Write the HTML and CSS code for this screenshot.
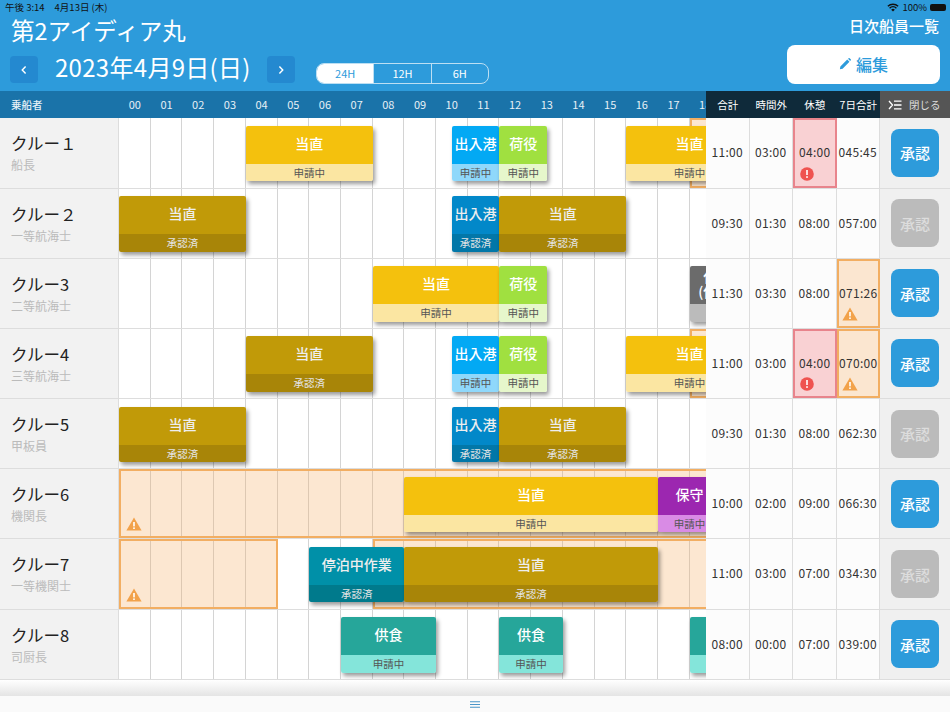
FILE: index.html
```html
<!DOCTYPE html>
<html lang="ja">
<head>
  <meta charset="UTF-8">
  <title>日次船員一覧</title>
  <link rel="stylesheet" href="styles.css">
</head>
<body>
  <svg class="defs" width="0" height="0">
    <symbol id="warn" viewBox="0 0 16 14">
      <path d="M8 .5 15.6 13.6H.4Z" fill="#f2a24a"/>
      <rect x="7.2" y="5" width="1.6" height="4.4" fill="#fff"/>
      <rect x="7.2" y="10.4" width="1.6" height="1.6" fill="#fff"/>
    </symbol>
    <symbol id="alert" viewBox="0 0 14 14">
      <circle cx="7" cy="7" r="6.8" fill="#ef5350"/>
      <rect x="6.2" y="3" width="1.6" height="5" fill="#fff"/>
      <rect x="6.2" y="9.2" width="1.6" height="1.7" fill="#fff"/>
    </symbol>
  </svg>

  <div class="app">
    <header class="topbar">
      <div class="status">
        <span class="status-time">午後 3:14<span class="status-date">4月13日 (木)</span></span>
        <span class="status-right">
          <svg class="wifi" viewBox="0 0 14 10" width="12" height="9"><path d="M1 3.6a8.6 8.6 0 0 1 12 0M3 5.8a5.7 5.7 0 0 1 8 0" fill="none" stroke="#111" stroke-width="1.6"/><path d="M7 9.6 4.9 7.6a3 3 0 0 1 4.2 0Z" fill="#111"/></svg>
          100%
          <span class="battery"></span>
        </span>
      </div>
      <div class="topbar-main">
        <div class="topbar-left">
          <h1 class="ship">第2アイディア丸</h1>
          <div class="date-row">
            <button class="nav-btn"><svg viewBox="0 0 10 12" width="8" height="10"><path d="M7 1.5 2.8 6 7 10.500" fill="none" stroke="#fff" stroke-width="1.8"/></svg></button>
            <span class="date">2023年4月9日(日)</span>
            <button class="nav-btn"><svg viewBox="0 0 10 12" width="8" height="10"><path d="M3 1.5 7.200 6 3 10.500" fill="none" stroke="#fff" stroke-width="1.8"/></svg></button>
            <div class="segments">
              <span class="seg seg-active">24H</span>
              <span class="seg">12H</span>
              <span class="seg">6H</span>
            </div>
          </div>
        </div>
        <div class="topbar-right">
          <div class="page-name">日次船員一覧</div>
          <button class="edit-btn">
            <svg viewBox="0 0 14 14" width="12" height="12"><path d="M1 13 1.600 9.800 9.600 1.800 12.200 4.400 4.200 12.400Z M10.500 1 11.300.3a.8.8 0 0 1 1.100 0l1.300 1.300a.8.8 0 0 1 0 1.100L13 3.500Z" fill="#2d9bdb"/></svg>
            編集
          </button>
        </div>
      </div>
    </header>

    <div class="table-head">
      <div class="head-crew">乗船者</div>
      <div class="head-hours">
        <span>00</span><span>01</span><span>02</span><span>03</span><span>04</span><span>05</span>
        <span>06</span><span>07</span><span>08</span><span>09</span><span>10</span><span>11</span>
        <span>12</span><span>13</span><span>14</span><span>15</span><span>16</span><span>17</span>
        <span>18</span>
      </div>
      <div class="head-sum"><span>合計</span><span>時間外</span><span>休憩</span><span>7日合計</span></div>
      <div class="head-close">
        <svg viewBox="0 0 14 10" width="14" height="10"><path d="M1 1 4.500 5 1 9M6 1.200H13.500M6 5H13.500M6 8.800H13.500" fill="none" stroke="#fff" stroke-width="1.300"/></svg>
        閉じる
      </div>
    </div>

    <div class="row">
      <div class="crew"><div class="crew-name">クルー１</div><div class="crew-role">船長</div></div>
      <div class="timeline">
        <div class="over" style="--start:18;--hours:3"></div>
        <div class="block duty" style="--start:4;--hours:4"><div class="block-title">当直</div><div class="block-state">申請中</div></div>
        <div class="block port" style="--start:10.5;--hours:1.5"><div class="block-title">出入港</div><div class="block-state">申請中</div></div>
        <div class="block cargo" style="--start:12;--hours:1.5"><div class="block-title">荷役</div><div class="block-state">申請中</div></div>
        <div class="block duty" style="--start:16;--hours:4"><div class="block-title">当直</div><div class="block-state">申請中</div></div>
      </div>
      <div class="sum">
        <div class="cell">11:00</div><div class="cell">03:00</div>
        <div class="cell cell-alert">04:00<svg class="mark"><use href="#alert"/></svg></div>
        <div class="cell">045:45</div>
      </div>
      <div class="action"><button class="approve">承認</button></div>
    </div>

    <div class="row">
      <div class="crew"><div class="crew-name">クルー２</div><div class="crew-role">一等航海士</div></div>
      <div class="timeline">
        <div class="block duty done" style="--start:0;--hours:4"><div class="block-title">当直</div><div class="block-state">承認済</div></div>
        <div class="block port done" style="--start:10.5;--hours:1.5"><div class="block-title">出入港</div><div class="block-state">承認済</div></div>
        <div class="block duty done" style="--start:12;--hours:4"><div class="block-title">当直</div><div class="block-state">承認済</div></div>
      </div>
      <div class="sum">
        <div class="cell">09:30</div><div class="cell">01:30</div><div class="cell">08:00</div><div class="cell">057:00</div>
      </div>
      <div class="action"><button class="approve approve-off">承認</button></div>
    </div>

    <div class="row">
      <div class="crew"><div class="crew-name">クルー3</div><div class="crew-role">二等航海士</div></div>
      <div class="timeline">
        <div class="block duty" style="--start:8;--hours:4"><div class="block-title">当直</div><div class="block-state">申請中</div></div>
        <div class="block cargo" style="--start:12;--hours:1.5"><div class="block-title">荷役</div><div class="block-state">申請中</div></div>
        <div class="block rest" style="--start:18;--hours:1.75"><div class="block-title block-title-two">休憩<br>(停泊)</div><div class="block-state"></div></div>
      </div>
      <div class="sum">
        <div class="cell">11:30</div><div class="cell">03:30</div><div class="cell">08:00</div>
        <div class="cell cell-warn">071:26<svg class="mark mark-warn"><use href="#warn"/></svg></div>
      </div>
      <div class="action"><button class="approve">承認</button></div>
    </div>

    <div class="row">
      <div class="crew"><div class="crew-name">クルー4</div><div class="crew-role">三等航海士</div></div>
      <div class="timeline">
        <div class="over" style="--start:18;--hours:3"></div>
        <div class="block duty done" style="--start:4;--hours:4"><div class="block-title">当直</div><div class="block-state">承認済</div></div>
        <div class="block port" style="--start:10.5;--hours:1.5"><div class="block-title">出入港</div><div class="block-state">申請中</div></div>
        <div class="block cargo" style="--start:12;--hours:1.5"><div class="block-title">荷役</div><div class="block-state">申請中</div></div>
        <div class="block duty" style="--start:16;--hours:4"><div class="block-title">当直</div><div class="block-state">申請中</div></div>
      </div>
      <div class="sum">
        <div class="cell">11:00</div><div class="cell">03:00</div>
        <div class="cell cell-alert">04:00<svg class="mark"><use href="#alert"/></svg></div>
        <div class="cell cell-warn">070:00<svg class="mark mark-warn"><use href="#warn"/></svg></div>
      </div>
      <div class="action"><button class="approve">承認</button></div>
    </div>

    <div class="row">
      <div class="crew"><div class="crew-name">クルー5</div><div class="crew-role">甲板員</div></div>
      <div class="timeline">
        <div class="block duty done" style="--start:0;--hours:4"><div class="block-title">当直</div><div class="block-state">承認済</div></div>
        <div class="block port done" style="--start:10.5;--hours:1.5"><div class="block-title">出入港</div><div class="block-state">承認済</div></div>
        <div class="block duty done" style="--start:12;--hours:4"><div class="block-title">当直</div><div class="block-state">承認済</div></div>
      </div>
      <div class="sum">
        <div class="cell">09:30</div><div class="cell">01:30</div><div class="cell">08:00</div><div class="cell">062:30</div>
      </div>
      <div class="action"><button class="approve approve-off">承認</button></div>
    </div>

    <div class="row">
      <div class="crew"><div class="crew-name">クルー6</div><div class="crew-role">機関長</div></div>
      <div class="timeline">
        <div class="over" style="--start:0;--hours:21"><svg class="mark mark-warn"><use href="#warn"/></svg></div>
        <div class="block duty" style="--start:9;--hours:8"><div class="block-title">当直</div><div class="block-state">申請中</div></div>
        <div class="block repair" style="--start:17;--hours:2"><div class="block-title">保守</div><div class="block-state">申請中</div></div>
      </div>
      <div class="sum">
        <div class="cell">10:00</div><div class="cell">02:00</div><div class="cell">09:00</div><div class="cell">066:30</div>
      </div>
      <div class="action"><button class="approve">承認</button></div>
    </div>

    <div class="row">
      <div class="crew"><div class="crew-name">クルー7</div><div class="crew-role">一等機関士</div></div>
      <div class="timeline">
        <div class="over" style="--start:0;--hours:5"><svg class="mark mark-warn"><use href="#warn"/></svg></div>
        <div class="over" style="--start:8;--hours:13"></div>
        <div class="block work done" style="--start:6;--hours:3"><div class="block-title">停泊中作業</div><div class="block-state">承認済</div></div>
        <div class="block duty done" style="--start:9;--hours:8"><div class="block-title">当直</div><div class="block-state">承認済</div></div>
      </div>
      <div class="sum">
        <div class="cell">11:00</div><div class="cell">03:00</div><div class="cell">07:00</div><div class="cell">034:30</div>
      </div>
      <div class="action"><button class="approve approve-off">承認</button></div>
    </div>

    <div class="row">
      <div class="crew"><div class="crew-name">クルー8</div><div class="crew-role">司厨長</div></div>
      <div class="timeline">
        <div class="block meal" style="--start:7;--hours:3"><div class="block-title">供食</div><div class="block-state">申請中</div></div>
        <div class="block meal" style="--start:12;--hours:2"><div class="block-title">供食</div><div class="block-state">申請中</div></div>
        <div class="block meal" style="--start:18;--hours:3"><div class="block-title">供食</div><div class="block-state">申請中</div></div>
      </div>
      <div class="sum">
        <div class="cell">08:00</div><div class="cell">00:00</div><div class="cell">07:00</div><div class="cell">039:00</div>
      </div>
      <div class="action"><button class="approve">承認</button></div>
    </div>

    <div class="spacer"></div>
    <footer class="footer">
      <svg viewBox="0 0 10 7" width="10" height="7"><path d="M0 .75H10M0 3.500H10M0 6.250H10" stroke="#4a95c8" stroke-width="1.200"/></svg>
    </footer>
  </div>
</body>
</html>
```

FILE: styles.css
```css
/* ページ全体 */
* {
  box-sizing: border-box;
}
body {
  margin: 0;
  background: #fff;
  color: #222;
  font-family: "Noto Sans CJK JP", "Noto Sans", sans-serif;
}
button {
  border: 0;
  padding: 0;
  font-family: inherit;
}
.defs {
  position: absolute;
}
.app {
  display: flex;
  flex-direction: column;
  width: 950px;
  height: 712px;
  overflow: hidden;
}

/* 上部の青いヘッダー */
.topbar {
  height: 91px;
  background: #2d9bdb;
  color: #fff;
}
.status {
  display: flex;
  justify-content: space-between;
  height: 14px;
  padding: 0 4px 0 5px;
  color: #111;
  font-size: 9.500px;
  line-height: 15px;
}
.status-date {
  margin-left: 10px;
}
.status-right {
  display: flex;
  align-items: center;
  gap: 3px;
}
.battery {
  width: 16px;
  height: 7px;
  border-radius: 2px;
  background: #111;
}
.topbar-main {
  display: flex;
  justify-content: space-between;
}
.ship {
  margin: -1px 0 9px 11px;
  font-size: 23.500px;
  font-weight: 400;
  line-height: 34px;
}
.date-row {
  display: flex;
  align-items: flex-start;
  padding-left: 10px;
}
.nav-btn {
  display: flex;
  align-items: center;
  justify-content: center;
  width: 28px;
  height: 27px;
  border-radius: 4px;
  background: #2489d0;
}
.date {
  width: 195px;
  margin: 0 17px;
  font-size: 24px;
  letter-spacing: 0.300px;
  line-height: 22px;
  white-space: nowrap;
}
.segments {
  display: flex;
  width: 173px;
  height: 21px;
  margin: 7px 0 0 21px;
  overflow: hidden;
  border: 1px solid #bcdff3;
  border-radius: 8px;
}
.seg {
  flex: 1;
  border-left: 1px solid #bcdff3;
  font-size: 11px;
  line-height: 19px;
  text-align: center;
}
.seg-active {
  border-left: 0;
  background: #fff;
  color: #2d9bdb;
}
.topbar-right {
  display: flex;
  flex-direction: column;
  align-items: flex-end;
  padding-right: 10px;
}
.page-name {
  padding-right: 1px;
  font-size: 15px;
  font-weight: 500;
  line-height: 23px;
}
.edit-btn {
  display: flex;
  align-items: center;
  justify-content: center;
  gap: 5px;
  width: 153px;
  height: 39px;
  margin-top: 8px;
  padding-bottom: 2px;
  border-radius: 8px;
  background: #fff;
  color: #2d9bdb;
  font-size: 16px;
  font-weight: 500;
}

/* 表のヘッダー行 */
.table-head {
  display: flex;
  height: 27px;
  background: #1a73a9;
  color: #e6f0f6;
  font-size: 10.500px;
  line-height: 27px;
}
.head-crew {
  width: 119px;
  padding-left: 11px;
  font-weight: 500;
}
.head-hours {
  display: flex;
  width: 587px;
  overflow: hidden;
  font-size: 11px;
}
.head-hours span {
  flex: 0 0 31.700px;
  text-align: center;
}
.head-sum {
  display: flex;
  width: 174px;
  background: #0f2a3a;
  color: #fff;
}
.head-sum span {
  flex: 0 0 25%;
  text-align: center;
  white-space: nowrap;
}
.head-close {
  display: flex;
  align-items: center;
  gap: 7px;
  width: 70px;
  padding-left: 8px;
  background: #555;
  color: #ddd;
}

/* 船員ごとの行 */
.row {
  display: flex;
  flex: 0 0 70.200px;
  border-bottom: 1px solid #ddd;
}
.table-head + .row {
  flex-basis: 70.500px;
}
.crew {
  width: 119px;
  padding: 14px 0 0 11px;
  border-right: 1px solid #ddd;
  background: #f2f2f2;
}
.crew-name {
  font-size: 16.500px;
  line-height: 22px;
}
.crew-role {
  margin-top: 1px;
  color: #bbb;
  font-size: 12px;
  line-height: 20px;
}
.timeline {
  position: relative;
  width: 587px;
  overflow: hidden;
  background: repeating-linear-gradient(to right, #fff 0, #fff 30.700px, #d4d4d4 30.700px, #d4d4d4 31.700px);
}

/* 時間軸上の帯。位置は --start と --hours で決める */
.over,
.block {
  position: absolute;
  left: calc(var(--start) * 31.700px);
  width: calc(var(--hours) * 31.700px);
}
.over {
  top: 0;
  bottom: 0;
  border: 2px solid #f2ae62;
  background: rgba(245, 170, 90, 0.28);
}
.block {
  display: flex;
  flex-direction: column;
  top: 7.500px;
  height: 55.500px;
  overflow: hidden;
  border-radius: 2px;
  box-shadow: 2px 3px 4px rgba(0, 0, 0, 0.4);
  text-align: center;
}
.block-title {
  height: 38px;
  background: var(--head);
  color: #fff;
  font-size: 14px;
  font-weight: 500;
  line-height: 35px;
}
.block-title-two {
  padding-top: 3px;
  line-height: 15px;
}
.block-state {
  height: 17.500px;
  background: var(--foot);
  color: #555;
  font-size: 10.500px;
  line-height: 17px;
}
.done .block-title {
  color: #eee;
}
.done .block-state {
  color: #e4e4e4;
}
.duty {
  --head: #f4c10d;
  --foot: #fbe6a2;
}
.duty.done {
  --head: #c19a08;
  --foot: #a88508;
}
.port {
  --head: #03a9f4;
  --foot: #8fd8fb;
}
.port.done {
  --head: #0288c9;
  --foot: #0277a8;
}
.cargo {
  --head: #a0e040;
  --foot: #e6f7cb;
}
.work {
  --head: #0090a8;
  --foot: #007a8c;
}
.meal {
  --head: #26a69a;
  --foot: #84e5da;
}
.repair {
  --head: #9c27b0;
  --foot: #d98be5;
}
.rest {
  --head: #6b6b6b;
  --foot: #bbb;
}

/* 集計セル */
.sum {
  display: flex;
  width: 174px;
}
.cell {
  position: relative;
  flex: 0 0 25%;
  border-right: 1px solid #ddd;
  background: #fcfcfc;
  color: #333;
  font-size: 12px;
  letter-spacing: 0.300px;
  line-height: 68px;
  text-align: center;
}
.cell-alert {
  border: 2px solid #e8848c;
  background: #f9d1d3;
  line-height: 64px;
}
.cell-warn {
  border: 2px solid #f2ae62;
  background: #fbe6d0;
  line-height: 64px;
}
.mark {
  position: absolute;
  left: 5px;
  bottom: 5px;
  width: 14px;
  height: 14px;
}
.mark-warn {
  width: 16px;
}
.cell .mark-warn {
  left: 3px;
}

/* 承認ボタン */
.action {
  display: flex;
  align-items: center;
  justify-content: center;
  width: 70px;
  background: #f0f0f0;
}
.approve {
  width: 48px;
  height: 48px;
  border-radius: 8px;
  background: #2d9bdb;
  color: #fff;
  font-size: 15px;
  font-weight: 500;
}
.approve-off {
  background: #bbb;
  color: #ddd;
}

/* 下部 */
.spacer {
  flex: 1;
  background: linear-gradient(#fff, #e4e4e4);
}
.footer {
  display: flex;
  align-items: center;
  justify-content: center;
  height: 16px;
  background: #fafafa;
}
```
